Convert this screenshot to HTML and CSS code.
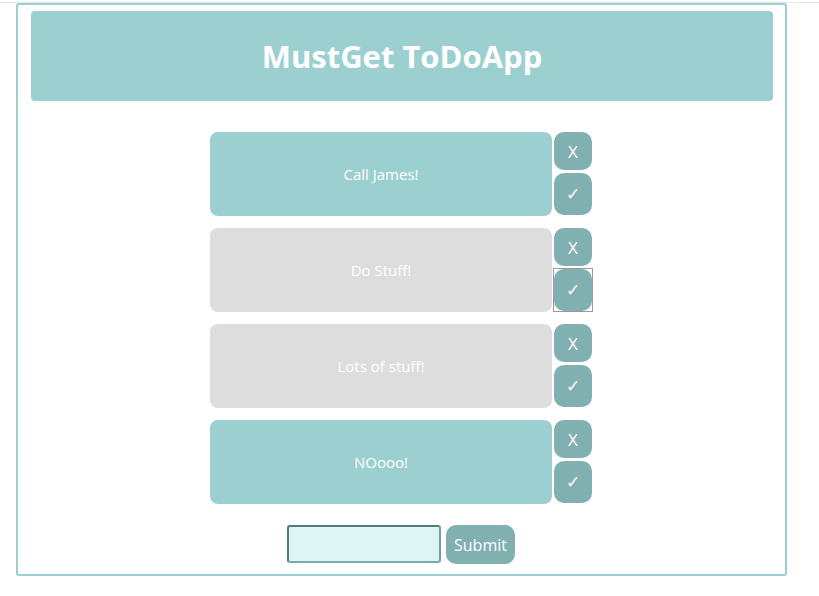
FILE: index.html
```html
<!DOCTYPE html>
<html>
<head>
<meta charset="utf-8">
<link rel="stylesheet" href="styles.css">
</head>
<body>
<div class="topline"></div>
<div class="app">
  <header class="header"><h1 class="title">MustGet ToDoApp</h1></header>
  <ul class="list">
    <li class="item">
      <div class="card card-teal">Call James!</div>
      <div class="actions">
        <button class="btn btn-x">X</button>
        <button class="btn btn-check">✓</button>
      </div>
    </li>
    <li class="item">
      <div class="card card-gray">Do Stuff!</div>
      <div class="actions">
        <button class="btn btn-x">X</button>
        <button class="btn btn-check focused">✓</button>
      </div>
    </li>
    <li class="item">
      <div class="card card-gray">Lots of stuff!</div>
      <div class="actions">
        <button class="btn btn-x">X</button>
        <button class="btn btn-check">✓</button>
      </div>
    </li>
    <li class="item">
      <div class="card card-teal">NOooo!</div>
      <div class="actions">
        <button class="btn btn-x">X</button>
        <button class="btn btn-check">✓</button>
      </div>
    </li>
  </ul>
  <form class="add">
    <input class="add-input" type="text">
    <button class="btn submit" type="button">Submit</button>
  </form>
</div>
</body>
</html>
```
FILE: styles.css
```css
html, body {
  margin: 0;
  padding: 0;
  background: #ffffff;
  font-family: "Open Sans", "Noto Sans", sans-serif;
}
.topline {
  height: 1px;
  margin-top: 2px;
  background: #e6e6e6;
}
.app {
  box-sizing: border-box;
  width: 771px;
  height: 573px;
  margin: 0 0 0 16px;
  border: 2px solid #9ccfd0;
  border-radius: 3px;
  padding: 6px 12px 0 13px;
}
.header {
  height: 90px;
  background: #9ccfd0;
  border-radius: 4px;
  display: flex;
  align-items: center;
  justify-content: center;
}
.title {
  margin: 0;
  color: #ffffff;
  font-size: 31px;
  font-weight: 700;
  letter-spacing: 0;
}
.list {
  list-style: none;
  margin: 31px 0 0 0;
  padding: 0;
  display: flex;
  flex-direction: column;
  align-items: center;
  gap: 12px;
}
.item {
  display: flex;
  gap: 2px;
  margin-right: 2px;
}
.card {
  width: 342px;
  height: 84px;
  border-radius: 8px;
  display: flex;
  align-items: center;
  justify-content: center;
  color: #ffffff;
  font-size: 15px;
}
.card-teal { background: #9ccfd0; }
.card-gray { background: #dddddd; }
.actions {
  display: flex;
  flex-direction: column;
  gap: 3px;
}
.btn {
  box-sizing: border-box;
  border: 0;
  background: #80b0b0;
  color: #ffffff;
  border-radius: 10px;
  padding: 0;
  font-family: "Open Sans", "Noto Sans", sans-serif;
  cursor: pointer;
}
.btn-x {
  width: 38px;
  height: 38px;
  font-size: 17px;
}
.btn-check {
  width: 38px;
  height: 42px;
  font-size: 17px;
  font-family: "DejaVu Sans", sans-serif;
}
.focused {
  position: relative;
}
.focused::after {
  content: "";
  position: absolute;
  top: -1px;
  left: -1px;
  right: -1px;
  bottom: -1px;
  border: 1px solid #9a9a9a;
}
.add {
  margin-top: 21px;
  display: flex;
  justify-content: center;
  gap: 5px;
  margin-right: 2px;
}
.add-input {
  box-sizing: border-box;
  width: 154px;
  height: 38px;
  margin: 0;
  background: #dff4f4;
  border: 2px solid;
  border-color: #4f7b7b #6f9f9f #79aaaa #4f7b7b;
  border-radius: 3px;
}
.submit {
  width: 69px;
  height: 39px;
  font-size: 16px;
}
```
